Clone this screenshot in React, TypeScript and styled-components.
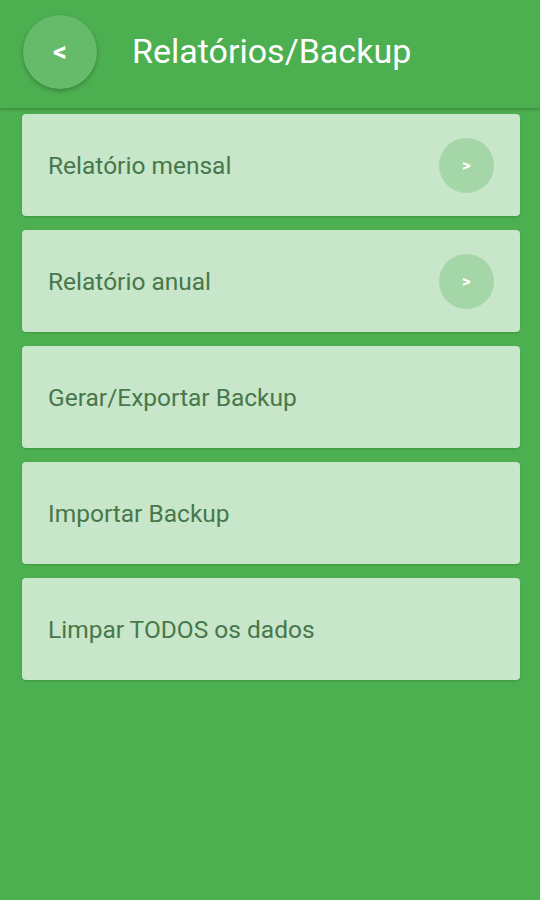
import styled, { createGlobalStyle } from "styled-components";

const GlobalStyle = createGlobalStyle`
  html, body {
    margin: 0;
    padding: 0;
    background: #4caf50;
  }
  body {
    font-family: Roboto, "Noto Sans", sans-serif;
  }
`;

const Page = styled.div`
  width: 540px;
  height: 900px;
  background: #4caf50;
  overflow: hidden;
`;

const Header = styled.div`
  display: flex;
  align-items: center;
  height: 108px;
  padding: 0 0 0 23px;
  box-sizing: border-box;
  background: #4caf50;
  box-shadow: 0 2px 3px rgba(0, 0, 0, 0.18);
  position: relative;
  z-index: 1;
`;

const BackBtn = styled.button`
  width: 74px;
  height: 74px;
  margin-top: -5px;
  border-radius: 50%;
  border: none;
  background: #66bb6a;
  color: #ffffff;
  font-family: Roboto, sans-serif;
  font-size: 27px;
  font-weight: 700;
  box-shadow: 0 2px 4px rgba(0, 0, 0, 0.25);
  display: flex;
  align-items: center;
  justify-content: center;
  padding: 0;
`;

const Title = styled.h1`
  margin: -7px 0 0 35px;
  font-family: Roboto, sans-serif;
  font-weight: 400;
  font-size: 34px;
  color: #ffffff;
`;

const List = styled.div`
  display: flex;
  flex-direction: column;
  gap: 14px;
  padding: 6px 20px 0 22px;
`;

const Card = styled.div`
  display: flex;
  align-items: center;
  justify-content: space-between;
  height: 102px;
  box-sizing: border-box;
  padding: 0 26px 0 26px;
  background: #c8e6c9;
  border-radius: 4px;
  box-shadow: 0 1px 2px rgba(0, 0, 0, 0.15);
`;

const Label = styled.span`
  font-family: Roboto, sans-serif;
  font-size: 24.5px;
  color: #47784b;
  margin-top: 0px;
`;

const Chevron = styled.div`
  width: 55px;
  height: 55px;
  border-radius: 50%;
  background: #a5d6a7;
  color: #ffffff;
  font-family: Roboto, sans-serif;
  font-weight: 700;
  font-size: 17px;
  display: flex;
  align-items: center;
  justify-content: center;
`;

const items: { label: string; arrow: boolean }[] = [
  { label: "Relatório mensal", arrow: true },
  { label: "Relatório anual", arrow: true },
  { label: "Gerar/Exportar Backup", arrow: false },
  { label: "Importar Backup", arrow: false },
  { label: "Limpar TODOS os dados", arrow: false },
];

export default function App() {
  return (
    <Page>
      <GlobalStyle />
      <Header>
        <BackBtn>&lt;</BackBtn>
        <Title>Relatórios/Backup</Title>
      </Header>
      <List>
        {items.map((it) => (
          <Card key={it.label}>
            <Label>{it.label}</Label>
            {it.arrow && <Chevron>&gt;</Chevron>}
          </Card>
        ))}
      </List>
    </Page>
  );
}
